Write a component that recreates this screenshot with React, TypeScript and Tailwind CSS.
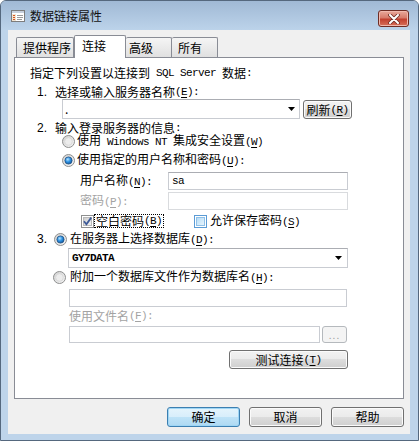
import React from "react";

const mono = "font-['Liberation_Mono'] text-[11px] tracking-[-0.6px]";

function M({ children }: { children: React.ReactNode }) {
  return <span className={mono}>{children}</span>;
}

// mnemonic like (E) with underlined letter
function K({ k }: { k: string }) {
  return (
    <span className={mono}>
      (<span className="underline underline-offset-[2px]">{k}</span>)
    </span>
  );
}

function Radio({ checked }: { checked?: boolean }) {
  return (
    <svg width="13" height="13" viewBox="0 0 13 13" className="shrink-0">
      <defs>
        <linearGradient id="radioRing" x1="0" y1="0" x2="1" y2="1">
          <stop offset="0" stopColor="#cfcfcf" />
          <stop offset="1" stopColor="#f7f7f7" />
        </linearGradient>
        <radialGradient id="radioDot" cx="0.4" cy="0.35" r="0.75">
          <stop offset="0" stopColor="#b6e4ff" />
          <stop offset="0.45" stopColor="#2f93e4" />
          <stop offset="1" stopColor="#0c4a8c" />
        </radialGradient>
      </defs>
      <circle cx="6.5" cy="6.5" r="6" fill="url(#radioRing)" stroke="#8e8f8f" />
      {checked ? (
        <circle cx="6.5" cy="6.5" r="3.6" fill="url(#radioDot)" stroke="#1f5285" strokeWidth="0.8" />
      ) : (
        <circle cx="6.5" cy="6.5" r="3.8" fill="#ececec" stroke="#d6d6d6" strokeWidth="0.8" />
      )}
    </svg>
  );
}

function Check({ checked, hot }: { checked?: boolean; hot?: boolean }) {
  return (
    <svg width="13" height="13" viewBox="0 0 13 13" className="shrink-0">
      <defs>
        <linearGradient id="chkGray" x1="0" y1="0" x2="1" y2="1">
          <stop offset="0" stopColor="#cbcbcb" />
          <stop offset="1" stopColor="#f6f6f6" />
        </linearGradient>
        <linearGradient id="chkBlue" x1="0" y1="0" x2="1" y2="1">
          <stop offset="0" stopColor="#b3dbf6" />
          <stop offset="1" stopColor="#eaf6fd" />
        </linearGradient>
      </defs>
      <rect x="0.5" y="0.5" width="12" height="12" fill="#ffffff" stroke={hot ? "#5b9bd5" : "#8e8f8f"} />
      <rect x="2.5" y="2.5" width="8" height="8" fill={hot ? "url(#chkBlue)" : "url(#chkGray)"} stroke={hot ? "#8fc0e8" : "#b9b9b9"} />
      {checked && (
        <path d="M3 6.3 L5.4 9.2 L10.2 2.6" fill="none" stroke="#3d5a98" strokeWidth="1.8" />
      )}
    </svg>
  );
}

function Arrow() {
  return (
    <svg width="7" height="4" viewBox="0 0 7 4" className="shrink-0">
      <path d="M0 0 H7 L3.5 4 Z" fill="#000" />
    </svg>
  );
}

const btn =
  "flex items-center justify-center rounded-[3px] border border-[#707070] bg-[linear-gradient(#f2f2f2_0%,#ebebeb_50%,#dddddd_50%,#cfcfcf_100%)] shadow-[inset_0_0_0_1px_#fbfbfb]";

const box = "border border-[#c9ccd2] border-t-[#abadb3] bg-white";

export default function App() {
  return (
    <div className="w-[419px] h-[441px] bg-white font-['Noto_Sans_CJK_SC',sans-serif] text-[12px] text-black">
      <div className="w-[419px] h-[441px] flex flex-col rounded-t-[6px] border border-[#55687e] bg-[#bed4ea]">
        {/* title bar */}
        <div className="h-[29px] flex items-center pl-[9px] pr-[9px] rounded-t-[5px] bg-[linear-gradient(#a0b9d5,#bcd3ea)]">
          <svg width="16" height="16" viewBox="0 0 16 16" className="shrink-0">
            <rect x="1.5" y="2.5" width="13" height="11" fill="#ffffff" stroke="#7d7d7d" />
            <rect x="2" y="3" width="12" height="2" fill="#c6cfdc" />
            <rect x="2" y="6" width="4" height="7" fill="#f2e3cf" />
            <rect x="3" y="7" width="2" height="1" fill="#d9531e" />
            <rect x="3" y="9" width="2" height="1" fill="#d9531e" />
            <rect x="3" y="11" width="2" height="1" fill="#d9531e" />
            <rect x="7" y="7" width="6" height="1" fill="#9a9a9a" />
            <rect x="7" y="9" width="6" height="1" fill="#9a9a9a" />
            <rect x="7" y="11" width="5" height="1" fill="#9a9a9a" />
          </svg>
          <span className="ml-[4px] text-[#111]">数据链接属性</span>
          <div className="ml-auto self-start mt-[9px] w-[31px] h-[17px] rounded-[3px] border border-[#6e2c24] bg-[linear-gradient(#e9a99b_0%,#d77b6b_45%,#c2402f_55%,#d7705a_100%)] flex items-center justify-center shadow-[inset_0_0_0_1px_#f0b8ad]">
            <svg width="12" height="10" viewBox="0 0 12 10">
              <path d="M2 1 L10 9 M10 1 L2 9" stroke="#6e2c24" strokeWidth="3.6" strokeLinecap="round" />
              <path d="M2 1 L10 9 M10 1 L2 9" stroke="#ffffff" strokeWidth="2" strokeLinecap="round" />
            </svg>
          </div>
        </div>

        {/* client area */}
        <div className="ml-[7px] w-[402px] h-[404px] bg-[#f0f0f0] flex flex-col">
          {/* tabs */}
          <div className="mt-[5px] ml-[8px] h-[22px] flex items-end">
            <div className="w-[58px] h-[20px] border border-b-0 border-[#898c95] rounded-t-[2px] bg-[linear-gradient(#f5f5f5,#e0e0e0)] pl-[6px] leading-[19px]">
              提供程序
            </div>
            <div className="relative z-10 -mb-[1px] w-[52px] h-[23px] border border-b-0 border-[#898c95] rounded-t-[2px] bg-white pl-[7px] leading-[19px]">
              连接
            </div>
            <div className="w-[46px] h-[20px] border border-b-0 border-l-0 border-[#898c95] rounded-t-[2px] bg-[linear-gradient(#f5f5f5,#e0e0e0)] pl-[3px] leading-[19px]">
              高级
            </div>
            <div className="w-[46px] h-[20px] border border-b-0 border-l-0 border-[#898c95] rounded-t-[2px] bg-[linear-gradient(#f5f5f5,#e0e0e0)] pl-[6px] leading-[19px]">
              所有
            </div>
          </div>

          {/* panel */}
          <div className="ml-[6px] w-[390px] h-[342px] border border-[#898c95] bg-white flex flex-col leading-[12px]">
            <div className="mt-[8px] h-[14px] pl-[15px] flex items-center whitespace-pre">
              指定下列设置以连接到<M>{" SQL Server "}</M>数据<M>:</M>
            </div>

            <div className="mt-[5px] h-[14px] pl-[22px] flex items-center whitespace-pre">
              <span className="w-[18px] font-['Liberation_Sans'] text-[12px]">1.</span>
              选择或输入服务器名称<K k="E" /><M>:</M>
            </div>

            <div className="h-[20px] pl-[47px] flex items-start">
              <div className={`w-[238px] h-[20px] ${box} flex items-center pl-[2px] pr-[4px]`}>
                <span className="flex-1">.</span>
                <Arrow />
              </div>
              <div className={`ml-[3px] mt-[1px] w-[49px] h-[19px] ${btn} whitespace-pre`}>
                刷新<K k="R" />
              </div>
            </div>

            <div className="mt-[3px] h-[12px] pl-[22px] flex items-center whitespace-pre">
              <span className="w-[18px] font-['Liberation_Sans'] text-[12px]">2.</span>
              输入登录服务器的信息<M>:</M>
            </div>

            <div className="mt-[1px] h-[12px] pl-[47px] flex items-center whitespace-pre">
              <Radio />
              <span className="ml-[2px]">
                使用<M>{" Windows NT "}</M>集成安全设置<K k="W" />
              </span>
            </div>

            <div className="mt-[6px] h-[14px] pl-[47px] flex items-center whitespace-pre">
              <Radio checked />
              <span className="ml-[2px]">
                使用指定的用户名称和密码<K k="U" /><M>:</M>
              </span>
            </div>

            <div className="mt-[5px] h-[18px] pl-[65px] flex items-center whitespace-pre">
              <span className="w-[88px]">
                用户名称<K k="N" /><M>:</M>
              </span>
              <div className={`w-[180px] h-[18px] ${box} flex items-center pl-[3px]`}>
                <M>sa</M>
              </div>
            </div>

            <div className="mt-[2px] h-[18px] pl-[65px] flex items-center whitespace-pre">
              <span className="w-[88px] text-[#a3a3a3]">
                密码<K k="P" /><M>:</M>
              </span>
              <div className="w-[180px] h-[18px] border border-[#d9dbde] bg-white" />
            </div>

            <div className="mt-[4px] h-[14px] pl-[66px] flex items-center whitespace-pre">
              <Check checked />
              <span className="h-[14px] border border-dotted border-black px-[1px] flex items-center">
                空白密码<K k="B" />
              </span>
              <span className="ml-[30px] flex items-center">
                <Check hot />
              </span>
              <span className="ml-[3px]">
                允许保存密码<K k="S" />
              </span>
            </div>

            <div className="mt-[4px] h-[14px] pl-[22px] flex items-center whitespace-pre">
              <span className="w-[17px] font-['Liberation_Sans'] text-[12px]">3.</span>
              <Radio checked />
              <span className="ml-[3px]">
                在服务器上选择数据库<K k="D" /><M>:</M>
              </span>
            </div>

            <div className="mt-[2px] h-[20px] pl-[53px] flex">
              <div className={`w-[280px] h-[20px] ${box} flex items-center pl-[3px] pr-[5px]`}>
                <span className={`flex-1 ${mono} font-bold`}>GY7DATA</span>
                <Arrow />
              </div>
            </div>

            <div className="mt-[2px] h-[14px] pl-[38px] flex items-center whitespace-pre">
              <Radio />
              <span className="ml-[4px]">
                附加一个数据库文件作为数据库名<K k="H" /><M>:</M>
              </span>
            </div>

            <div className="mt-[5px] h-[18px] pl-[54px] flex">
              <div className="w-[278px] h-[18px] border border-[#c9ccd2] bg-white" />
            </div>

            <div className="mt-[2px] h-[14px] pl-[54px] flex items-center whitespace-pre text-[#a3a3a3]">
              使用文件名<K k="F" /><M>:</M>
            </div>

            <div className="mt-[3px] h-[17px] pl-[54px] flex items-center">
              <div className="w-[251px] h-[17px] border border-[#c9ccd2] bg-white" />
              <div className="ml-[2px] w-[25px] h-[17px] rounded-[3px] border border-[#b5b9bd] bg-[#f4f4f4] flex items-center justify-center text-[#a0a0a0] text-[10px] tracking-[1px]">
                ...
              </div>
            </div>

            <div className="mt-[7px] h-[19px] pl-[214px] flex">
              <div className={`w-[119px] h-[19px] ${btn} whitespace-pre`}>
                测试连接<K k="T" />
              </div>
            </div>
          </div>

          {/* dialog buttons */}
          <div className="mt-[8px] pr-[6px] flex justify-end gap-[9px]">
            <div className="w-[73px] h-[20px] flex items-center justify-center rounded-[3px] border border-[#3c7fb1] bg-[linear-gradient(#e5f4fc_0%,#d8eefb_50%,#bfe3f7_50%,#aed9f3_100%)] shadow-[inset_0_0_0_1px_#9fd6f5]">
              确定
            </div>
            <div className={`w-[73px] h-[20px] ${btn}`}>取消</div>
            <div className={`w-[73px] h-[20px] ${btn}`}>帮助</div>
          </div>
        </div>
      </div>
    </div>
  );
}
